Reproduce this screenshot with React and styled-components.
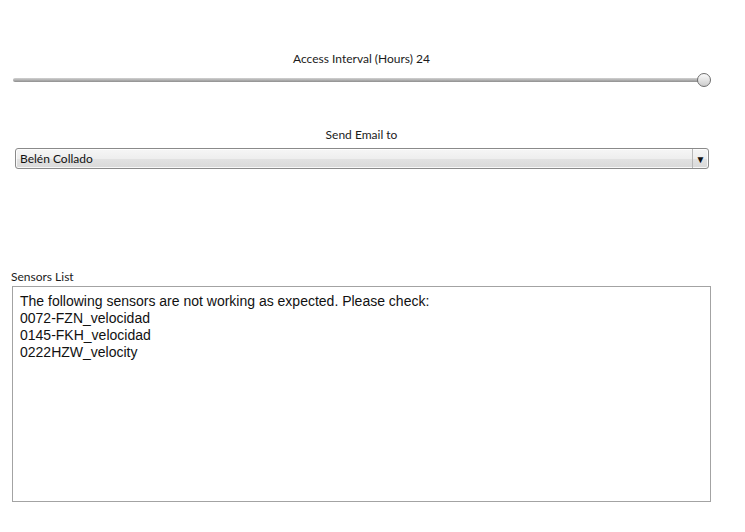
import React from "react"
import styled, { createGlobalStyle } from "styled-components"

const GlobalStyle = createGlobalStyle`
    body {
        margin:0;
        background:#ffffff;
        font-family:Lato, "Open Sans", sans-serif;
    }
`
const Page = styled.div`
    width:699px;
    padding:51px 0 0 12px;
    display:flex;
    flex-direction:column;
`
const Label = styled.div`
    font-size:12px;
    line-height:16px;
    color:#1b1b1b;
    text-align:${props => props.left ? "left" : "center"};
    margin-top:${props => props.top || 0}px;
    margin-left:${props => props.left ? -1 : 0}px;
`
const SliderWrap = styled.div`
    position:relative;
    height:14px;
    margin:6px 0 0 1px;
    display:flex;
    align-items:center;
`
const Track = styled.div`
    flex:1;
    height:4px;
    border-radius:2px;
    background:linear-gradient(#d2d2d2, #8f8f8f);
    margin-right:6px;
`
const Thumb = styled.div`
    position:absolute;
    right:0;
    top:0;
    width:12px;
    height:12px;
    border-radius:50%;
    border:1px solid #6e6e6e;
    background:linear-gradient(#fbfbfb, #cdcdcd);
`
const Select = styled.div`
    margin:5px 0 0 3px;
    width:692px;
    height:19px;
    border:1px solid #8a8a8a;
    border-radius:3px;
    display:flex;
    background:linear-gradient(#f6f6f6 0%, #eeeeee 50%, #e2e2e2 51%, #d9d9d9 100%);
    box-shadow:inset 0 0 0 1px rgba(255,255,255,0.8);
`
const SelectText = styled.div`
    flex:1;
    font-size:12px;
    line-height:19px;
    padding-left:4px;
    color:#111;
`
const Arrow = styled.div`
    width:15px;
    border-left:1px solid #b8b8b8;
    display:flex;
    align-items:center;
    justify-content:center;
    font-size:10px;
    color:#111;
`
const Area = styled.textarea`
    margin-top:1px;
    width:699px;
    height:216px;
    box-sizing:border-box;
    border:1px solid #a3a3a3;
    padding:6px 7px 4px;
    font-family:"Liberation Sans", Arial, sans-serif;
    font-size:14px;
    line-height:17px;
    color:#111;
    resize:none;
    outline:none;
    overflow:hidden;
`

const sensors = ["0072-FZN_velocidad", "0145-FKH_velocidad", "0222HZW_velocity"]

export default function App() {
    const text = ["The following sensors are not working as expected. Please check:", ...sensors].join("\n")
    return (
        <>
            <GlobalStyle/>
            <Page>
                <Label>Access Interval (Hours) 24</Label>
                <SliderWrap>
                    <Track/>
                    <Thumb/>
                </SliderWrap>
                <Label top={40}>Send Email to</Label>
                <Select>
                    <SelectText>Belén Collado</SelectText>
                    <Arrow>▼</Arrow>
                </Select>
                <Label left top={100}>Sensors List</Label>
                <Area readOnly value={text}/>
            </Page>
        </>
    )
}
